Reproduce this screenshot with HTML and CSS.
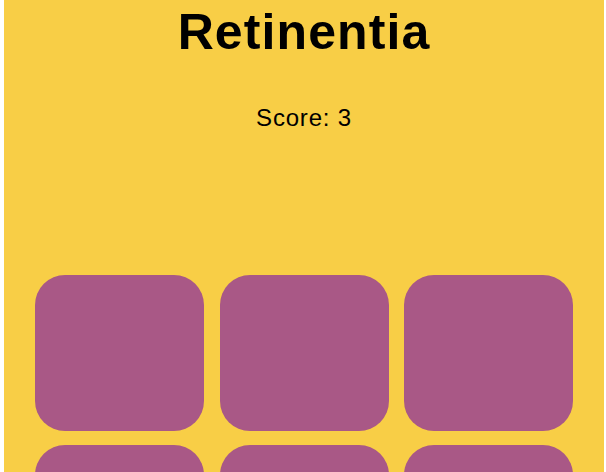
FILE: index.html
```html
<!DOCTYPE html>
<html>
<head>
<meta charset="utf-8">
<link rel="stylesheet" href="styles.css">
</head>
<body>
<div class="app">
  <h1 class="title">Retinentia</h1>
  <p class="score">Score: 3</p>
  <div class="board">
    <div class="tile"></div>
    <div class="tile"></div>
    <div class="tile"></div>
    <div class="tile"></div>
    <div class="tile"></div>
    <div class="tile"></div>
  </div>
</div>
</body>
</html>
```
FILE: styles.css
```css
html, body {
  margin: 0;
  padding: 0;
  background: #ffffff;
  height: 100%;
  overflow: hidden;
}
.app {
  margin-left: 4px;
  width: 600px;
  height: 472px;
  overflow: hidden;
  background: #F8CE46;
  box-sizing: border-box;
  padding: 4px 31px 0;
  font-family: "Liberation Sans", Arial, sans-serif;
  color: #000;
  text-align: center;
}
.title {
  margin: 0;
  font-size: 50px;
  line-height: 56px;
  font-weight: 700;
  letter-spacing: 1.1px;
}
.score {
  margin: 44px 0 0;
  font-size: 24px;
  line-height: 28px;
  letter-spacing: 0.8px;
}
.board {
  margin-top: 143px;
  display: grid;
  grid-template-columns: repeat(3, 1fr);
  column-gap: 15.5px;
  row-gap: 14px;
}
.tile {
  height: 156px;
  background: #A95886;
  border-radius: 30px;
}
```
